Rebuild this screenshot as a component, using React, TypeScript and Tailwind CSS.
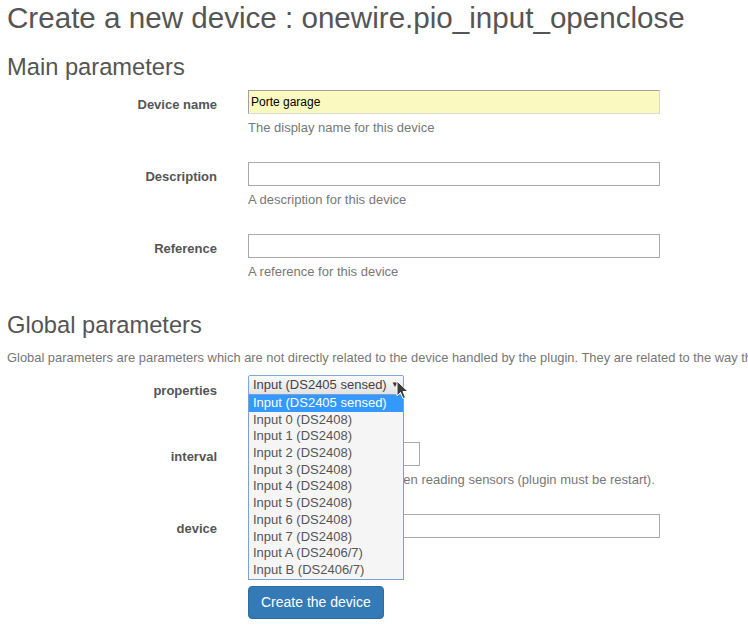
import React from "react";

const helps = "text-[13px] leading-[17px] text-[#777] mt-[5px] whitespace-nowrap";

function Row({
  label,
  children,
  labelPt = "pt-[4px]",
}: {
  label: string;
  children: React.ReactNode;
  labelPt?: string;
}) {
  return (
    <div className="flex items-start">
      <div className={`w-[210px] shrink-0 text-right font-bold text-[13px] leading-[17px] text-[#555] ${labelPt}`}>
        {label}
      </div>
      <div className="ml-[31px] flex-1">{children}</div>
    </div>
  );
}

const options = [
  "Input (DS2405 sensed)",
  "Input 0 (DS2408)",
  "Input 1 (DS2408)",
  "Input 2 (DS2408)",
  "Input 3 (DS2408)",
  "Input 4 (DS2408)",
  "Input 5 (DS2408)",
  "Input 6 (DS2408)",
  "Input 7 (DS2408)",
  "Input A (DS2406/7)",
  "Input B (DS2406/7)",
];

export default function App() {
  return (
    <div
      className="w-[748px] h-[629px] overflow-hidden bg-white text-[#555] pl-[7px]"
      style={{ fontFamily: '"Liberation Sans", Arial, sans-serif' }}
    >
      <h1 className="text-[29.6px] leading-[36px] text-[#555] whitespace-nowrap">
        Create a new device : onewire.pio_input_openclose
      </h1>
      <h2 className="text-[23.7px] leading-[30px] text-[#555] mt-[16px] whitespace-nowrap">
        Main parameters
      </h2>

      <div className="mt-[8px] flex flex-col gap-[26px]">
        <Row label="Device name" labelPt="pt-[6px]">
          <div className="w-[412px] h-[24px] bg-[#fafac0] border border-[#d8d8d8] border-t-[#a0a0a0] border-l-[#a0a0a0] flex items-center pl-[2px] text-[12px] text-black">
            Porte garage
          </div>
          <div className={helps}>The display name for this device</div>
        </Row>
        <Row label="Description" labelPt="pt-[6px]">
          <div className="w-[412px] h-[24px] bg-white border border-[#a9a9a9]" />
          <div className={helps}>A description for this device</div>
        </Row>
        <Row label="Reference" labelPt="pt-[6px]">
          <div className="w-[412px] h-[24px] bg-white border border-[#a9a9a9]" />
          <div className={helps}>A reference for this device</div>
        </Row>
      </div>

      <h2 className="text-[23.7px] leading-[30px] text-[#555] mt-[30px] whitespace-nowrap">
        Global parameters
      </h2>
      <p className="text-[12.9px] leading-[17px] text-[#777] mt-[9px] whitespace-nowrap">
        Global parameters are parameters which are not directly related to the device handled by the plugin. They are related to the way the plugin works.
      </p>

      <div className="mt-[9px] flex flex-col">
        <Row label="properties" labelPt="pt-[7px]">
          <div className="relative">
            <div className="w-[156px] h-[20px] border border-[#7ea6e0] rounded-[2px] bg-gradient-to-b from-[#fafafa] to-[#e2e2e2] flex items-center pl-[4px] text-[13px] text-[#444]">
              <span className="flex-1 whitespace-nowrap">Input (DS2405 sensed)</span>
              <span className="text-[8px] text-[#333] mr-[4px]">▼</span>
            </div>
            <div className="absolute left-0 top-[19px] z-10 w-[156px] bg-[#f5f5f5] border border-[#7e9ed6] text-[13px] text-[#555]">
              {options.map((o, i) => (
                <div
                  key={o}
                  className={`h-[16.7px] leading-[16.7px] pl-[4px] whitespace-nowrap ${i === 0 ? "bg-[#3399ff] text-white" : ""}`}
                >
                  {o}
                </div>
              ))}
            </div>
            <svg
              className="absolute left-[148px] top-[5px] z-20"
              width="14"
              height="21"
              viewBox="0 0 14 21"
            >
              <path d="M1 1 L1 16 L4.5 12.5 L7 18.5 L9.5 17.5 L7 11.5 L12 11.5 Z" fill="#3a3a3a" stroke="#fff" strokeWidth="1" />
            </svg>
          </div>
        </Row>
        <div className="h-[43px]" />
        <Row label="interval" labelPt="pt-[6px]">
          <div className="w-[172px] h-[24px] bg-white border border-[#a9a9a9]" />
          <div className={helps}>Interval (in seconds) between reading sensors (plugin must be restart).</div>
        </Row>
        <div className="h-[26px]" />
        <Row label="device" labelPt="pt-[6px]">
          <div className="w-[412px] h-[24px] bg-white border border-[#a9a9a9]" />
        </Row>
        <div className="h-[48px]" />
        <Row label="">
          <button className="h-[33px] px-[12px] rounded-[4px] bg-[#337ab7] border border-[#2e6da4] text-white text-[14px]">
            Create the device
          </button>
        </Row>
      </div>
    </div>
  );
}
